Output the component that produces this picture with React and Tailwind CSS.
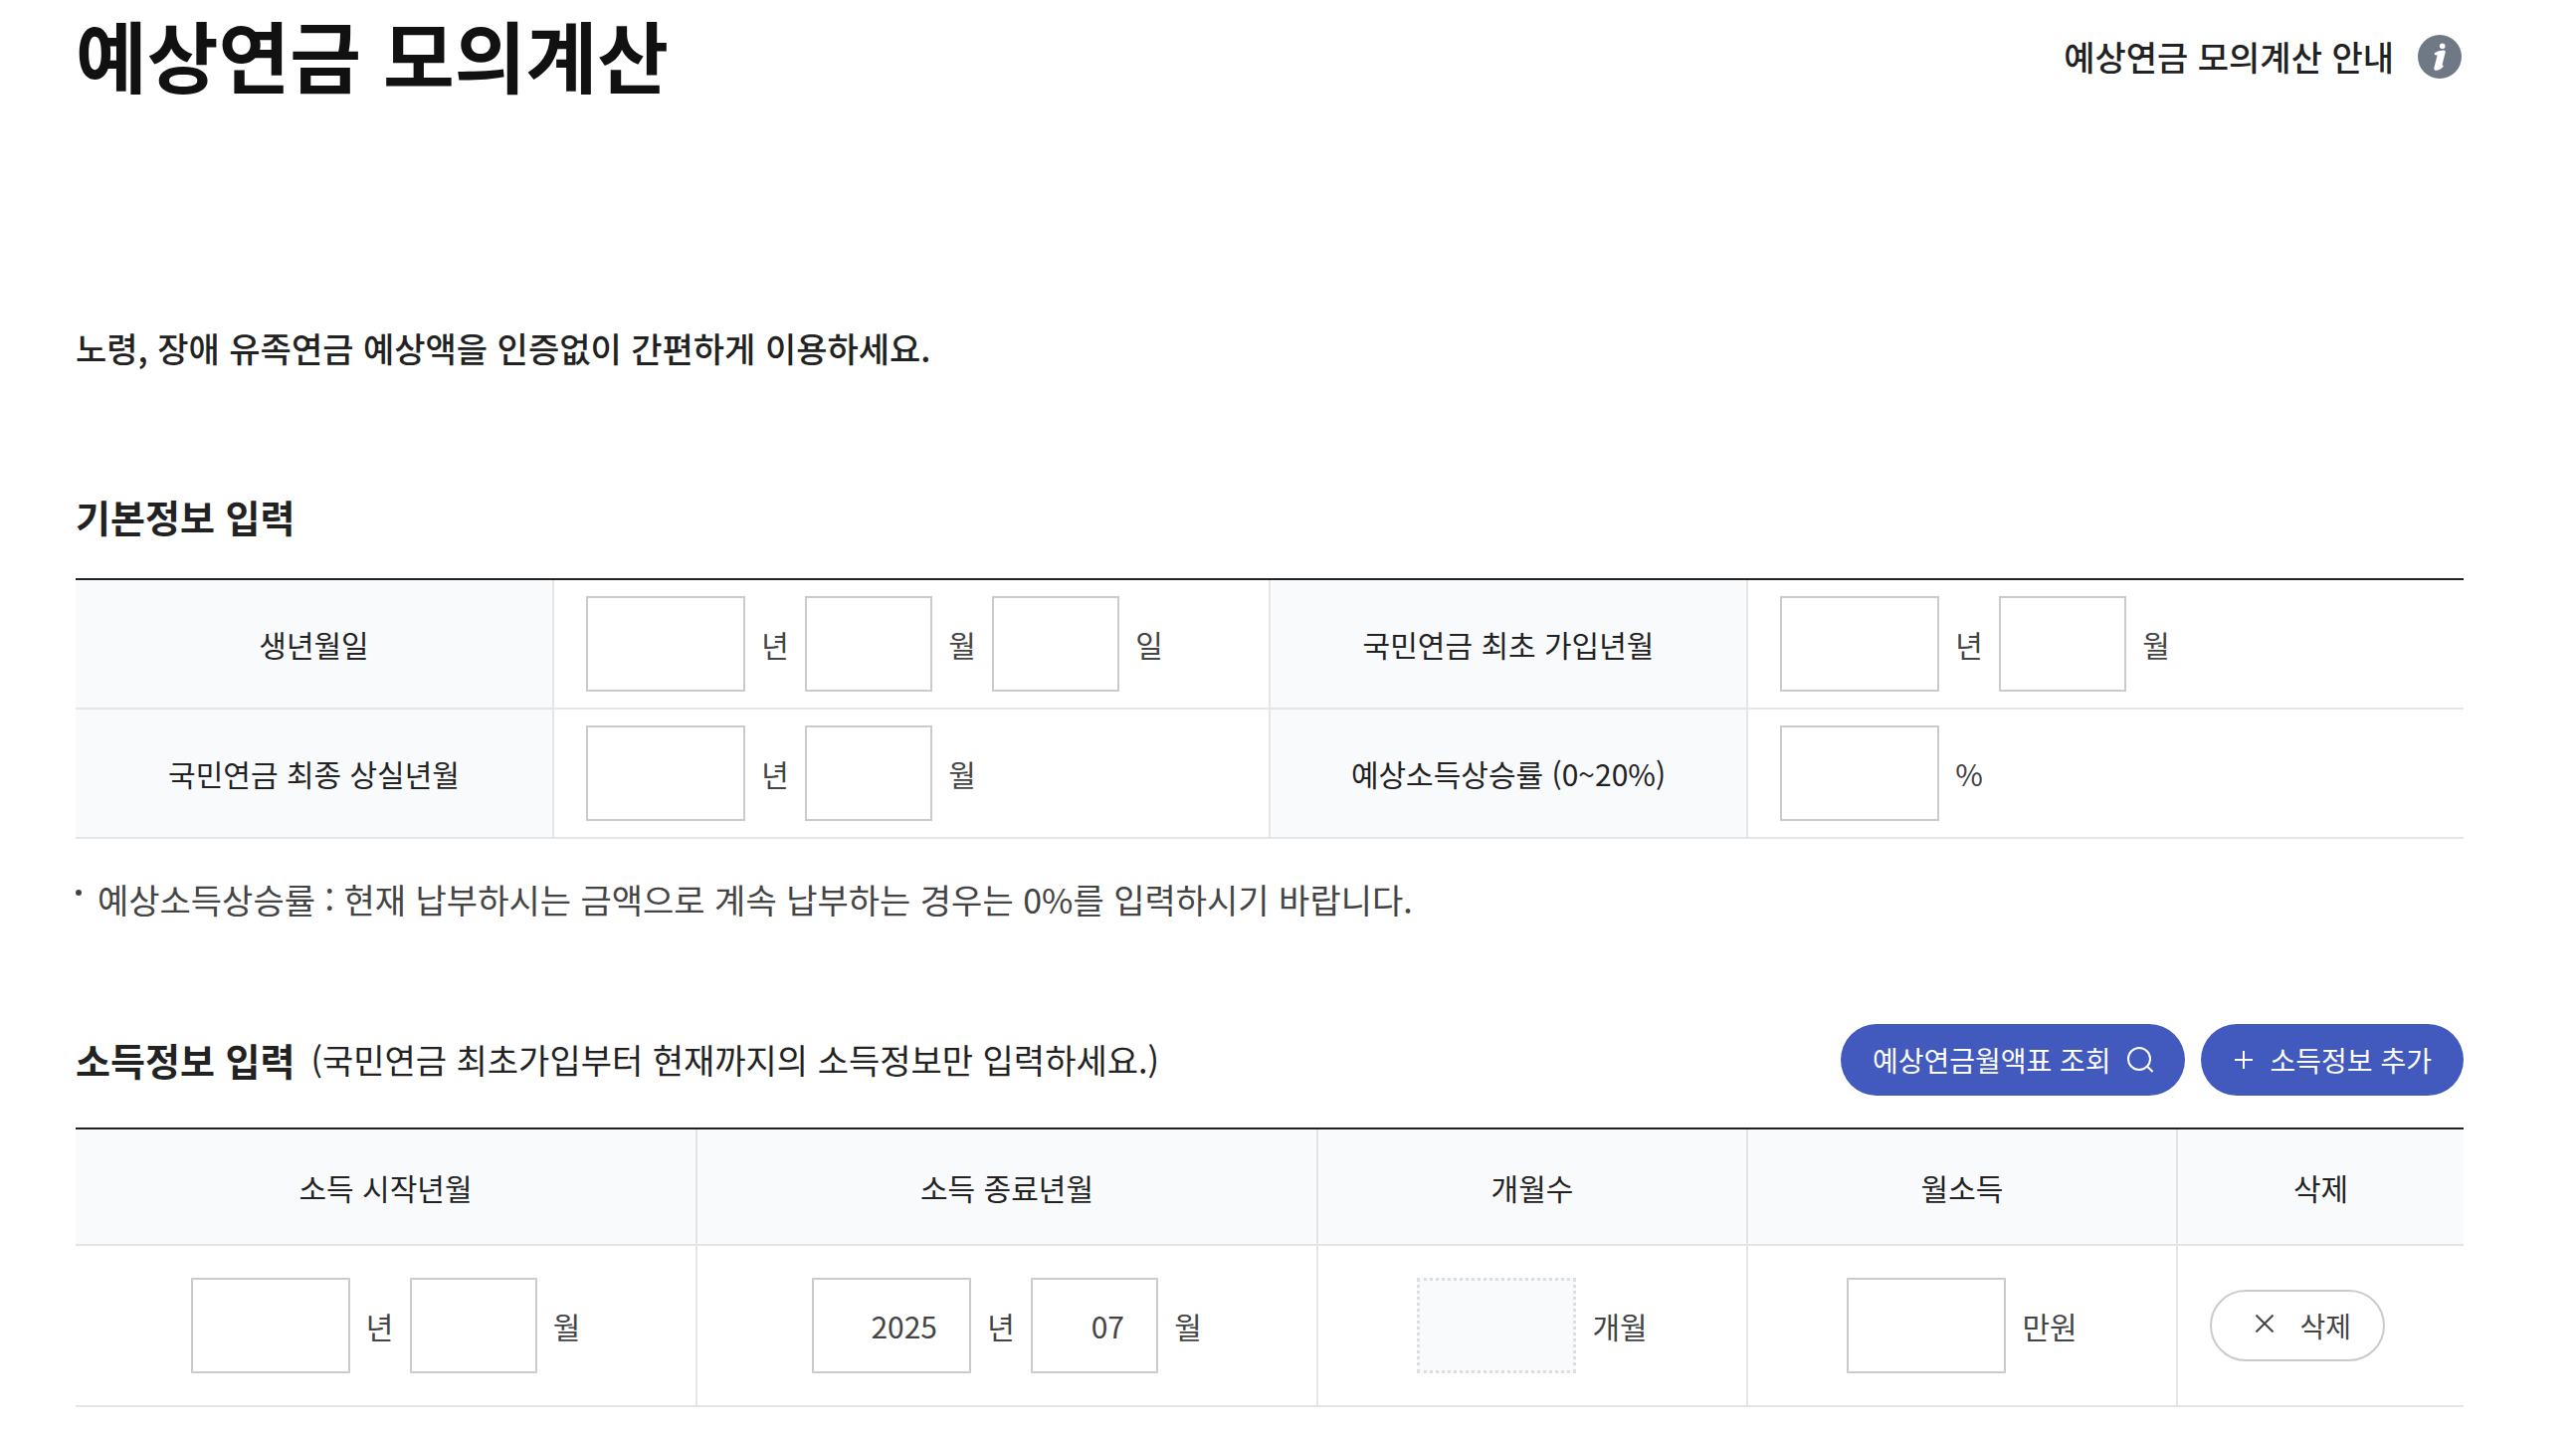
import React from "react";

const fieldBase =
  "h-24 border-2 border-[#cbcbcb] bg-white pr-8 pl-2 text-right text-[30px] text-[#444444] outline-none focus:border-[#4259bd]";

function Field({ unit, label, wide = false, disabled = false, value = "" }) {
  return (
    <label className="flex items-center gap-4">
      <input
        type="text"
        inputMode="numeric"
        aria-label={label}
        defaultValue={value}
        disabled={disabled}
        className={
          (wide ? "w-40 " : "w-32 ") +
          (disabled
            ? "h-24 border-3 border-dotted border-[#dedede] bg-[#f9fafc]"
            : fieldBase)
        }
      />
      <span className="min-w-7 text-center whitespace-nowrap">{unit}</span>
    </label>
  );
}

function InfoTh({ children }) {
  return (
    <th scope="row" className="border-b-2 border-[#e4e5e6] bg-[#f9fafc] px-4 font-normal text-[#222222]">
      {children}
    </th>
  );
}

function InfoTd({ children, last = false }) {
  return (
    <td
      className={
        "border-b-2 border-l-2 border-[#e4e5e6] px-8 " +
        (last ? "" : "border-r-2")
      }
    >
      <div className="flex items-center gap-4">{children}</div>
    </td>
  );
}

function InfoIcon() {
  return (
    <svg viewBox="0 0 44 44" className="size-11" aria-hidden="true">
      <circle cx="22" cy="22" r="22" fill="#6f7885" />
      <circle cx="24.7" cy="11.3" r="2.8" fill="#fff" />
      <path
        d="M16.8 18.2 Q20.5 15.6 25.6 15.6 Q28.2 15.6 27.6 18 L24.4 30.6 Q25.9 30.3 25.7 31.6 Q24 35 18.6 35.8 Q15.8 36 16.4 33 L19.6 20.4 Q16 20.6 16.8 18.2 Z"
        fill="#fff"
      />
    </svg>
  );
}

function SearchIcon() {
  return (
    <svg viewBox="0 0 28 28" className="size-7" fill="none" stroke="currentColor" strokeWidth="2" aria-hidden="true">
      <circle cx="14" cy="13" r="11" />
      <path d="M22 20.5 L27.5 26" />
    </svg>
  );
}

function PlusIcon() {
  return (
    <svg viewBox="0 0 18 18" className="size-[18px]" fill="none" stroke="currentColor" strokeWidth="2" aria-hidden="true">
      <path d="M9 0 V18 M0 9 H18" />
    </svg>
  );
}

function CloseIcon() {
  return (
    <svg viewBox="0 0 18 18" className="mb-1 size-[18px]" fill="none" stroke="currentColor" strokeWidth="2" aria-hidden="true">
      <path d="M0.5 0.5 L17.5 17.5 M17.5 0.5 L0.5 17.5" />
    </svg>
  );
}

const incomeColumns = [
  { name: "소득 시작년월", width: "w-[26%]" },
  { name: "소득 종료년월", width: "w-[26%]" },
  { name: "개월수", width: "w-[18%]" },
  { name: "월소득", width: "w-[18%]" },
  { name: "삭제", width: "w-[12%]" },
];

const incomeCell = "border-b-2 border-r-2 border-[#e4e5e6]";

export default function App() {
  return (
    <main
      lang="ko"
      className="min-h-screen bg-white pr-[113px] pb-6 pl-[76px] font-['Noto_Sans_CJK_KR','Noto_Sans',sans-serif] text-[30px] leading-[48px] text-[#444444]"
    >
      <header className="flex items-start justify-between">
        <h1 className="text-[78px] leading-[108px] font-bold text-[#111111]">예상연금 모의계산</h1>
        <a href="#guide" className="flex h-[114px] items-center gap-6 pr-0.5 text-[34px] font-medium text-[#222222]">
          예상연금 모의계산 안내
          <InfoIcon />
        </a>
      </header>

      <p className="mt-[210px] text-[34px] leading-[52px] font-medium text-[#222222]">
        노령, 장애 유족연금 예상액을 인증없이 간편하게 이용하세요.
      </p>

      <section>
        <h2 className="mt-[113px] text-[38px] leading-[60px] font-bold text-[#222222]">기본정보 입력</h2>
        <div className="mt-8 border-t-2 border-[#222222]">
          <table className="w-full table-fixed border-collapse">
            <colgroup>
              <col className="w-[20%]" />
              <col className="w-[30%]" />
              <col className="w-[20%]" />
              <col className="w-[30%]" />
            </colgroup>
            <tbody>
              <tr className="h-[129px]">
                <InfoTh>생년월일</InfoTh>
                <InfoTd>
                  <Field wide unit="년" label="생년월일 년" />
                  <Field unit="월" label="생년월일 월" />
                  <Field unit="일" label="생년월일 일" />
                </InfoTd>
                <InfoTh>국민연금 최초 가입년월</InfoTh>
                <InfoTd last>
                  <Field wide unit="년" label="최초 가입 년" />
                  <Field unit="월" label="최초 가입 월" />
                </InfoTd>
              </tr>
              <tr className="h-[130px]">
                <InfoTh>국민연금 최종 상실년월</InfoTh>
                <InfoTd>
                  <Field wide unit="년" label="최종 상실 년" />
                  <Field unit="월" label="최종 상실 월" />
                </InfoTd>
                <InfoTh>예상소득상승률 (0~20%)</InfoTh>
                <InfoTd last>
                  <Field wide unit="%" label="예상소득상승률" />
                </InfoTd>
              </tr>
            </tbody>
          </table>
        </div>
        <ul className="mt-[35px] text-[34px] leading-[52px]">
          <li className="flex gap-4">
            <span className="mt-4 size-1.5 rounded-full bg-[#444444]" />
            예상소득상승률 : 현재 납부하시는 금액으로 계속 납부하는 경우는 0%를 입력하시기 바랍니다.
          </li>
        </ul>
      </section>

      <section>
        <div className="mt-[99px] flex items-center justify-between">
          <div className="flex items-center gap-4 text-[#222222]">
            <h2 className="text-[38px] leading-[60px] font-bold">소득정보 입력</h2>
            <span className="text-[34px]">(국민연금 최초가입부터 현재까지의 소득정보만 입력하세요.)</span>
          </div>
          <div className="flex gap-4 text-[28px] text-white">
            <button type="button" className="flex h-18 items-center gap-3.5 rounded-full bg-[#4259bd] px-8">
              예상연금월액표 조회
              <SearchIcon />
            </button>
            <button type="button" className="flex h-18 items-center gap-[18px] rounded-full bg-[#4259bd] pr-8 pl-[34px]">
              <PlusIcon />
              소득정보 추가
            </button>
          </div>
        </div>
        <div className="mt-8 border-t-2 border-[#222222]">
          <table className="w-full table-fixed border-collapse">
            <thead>
              <tr className="h-[116px]">
                {incomeColumns.map((column) => (
                  <th
                    key={column.name}
                    scope="col"
                    className={
                      column.width +
                      " border-r-2 border-b-2 border-[#e4e5e6] bg-[#f9fafc] font-normal text-[#222222] last:border-r-0"
                    }
                  >
                    {column.name}
                  </th>
                ))}
              </tr>
            </thead>
            <tbody>
              <tr className="h-[162px]">
                <td className={incomeCell}>
                  <div className="flex justify-center gap-4">
                    <Field wide unit="년" label="소득 시작 년" />
                    <Field unit="월" label="소득 시작 월" />
                  </div>
                </td>
                <td className={incomeCell}>
                  <div className="flex justify-center gap-4">
                    <Field wide unit="년" label="소득 종료 년" value="2025" />
                    <Field unit="월" label="소득 종료 월" value="07" />
                  </div>
                </td>
                <td className={incomeCell}>
                  <div className="flex justify-center">
                    <Field wide disabled unit="개월" label="개월수" />
                  </div>
                </td>
                <td className={incomeCell}>
                  <div className="flex justify-center">
                    <Field wide unit="만원" label="월소득" />
                  </div>
                </td>
                <td className="border-b-2 border-[#e4e5e6] pl-8">
                  <button
                    type="button"
                    className="flex h-18 w-44 items-center justify-end gap-[26px] rounded-full border-2 border-[#cbcbcb] pr-8 text-[28px]"
                  >
                    <CloseIcon />
                    삭제
                  </button>
                </td>
              </tr>
            </tbody>
          </table>
        </div>
      </section>
    </main>
  );
}
